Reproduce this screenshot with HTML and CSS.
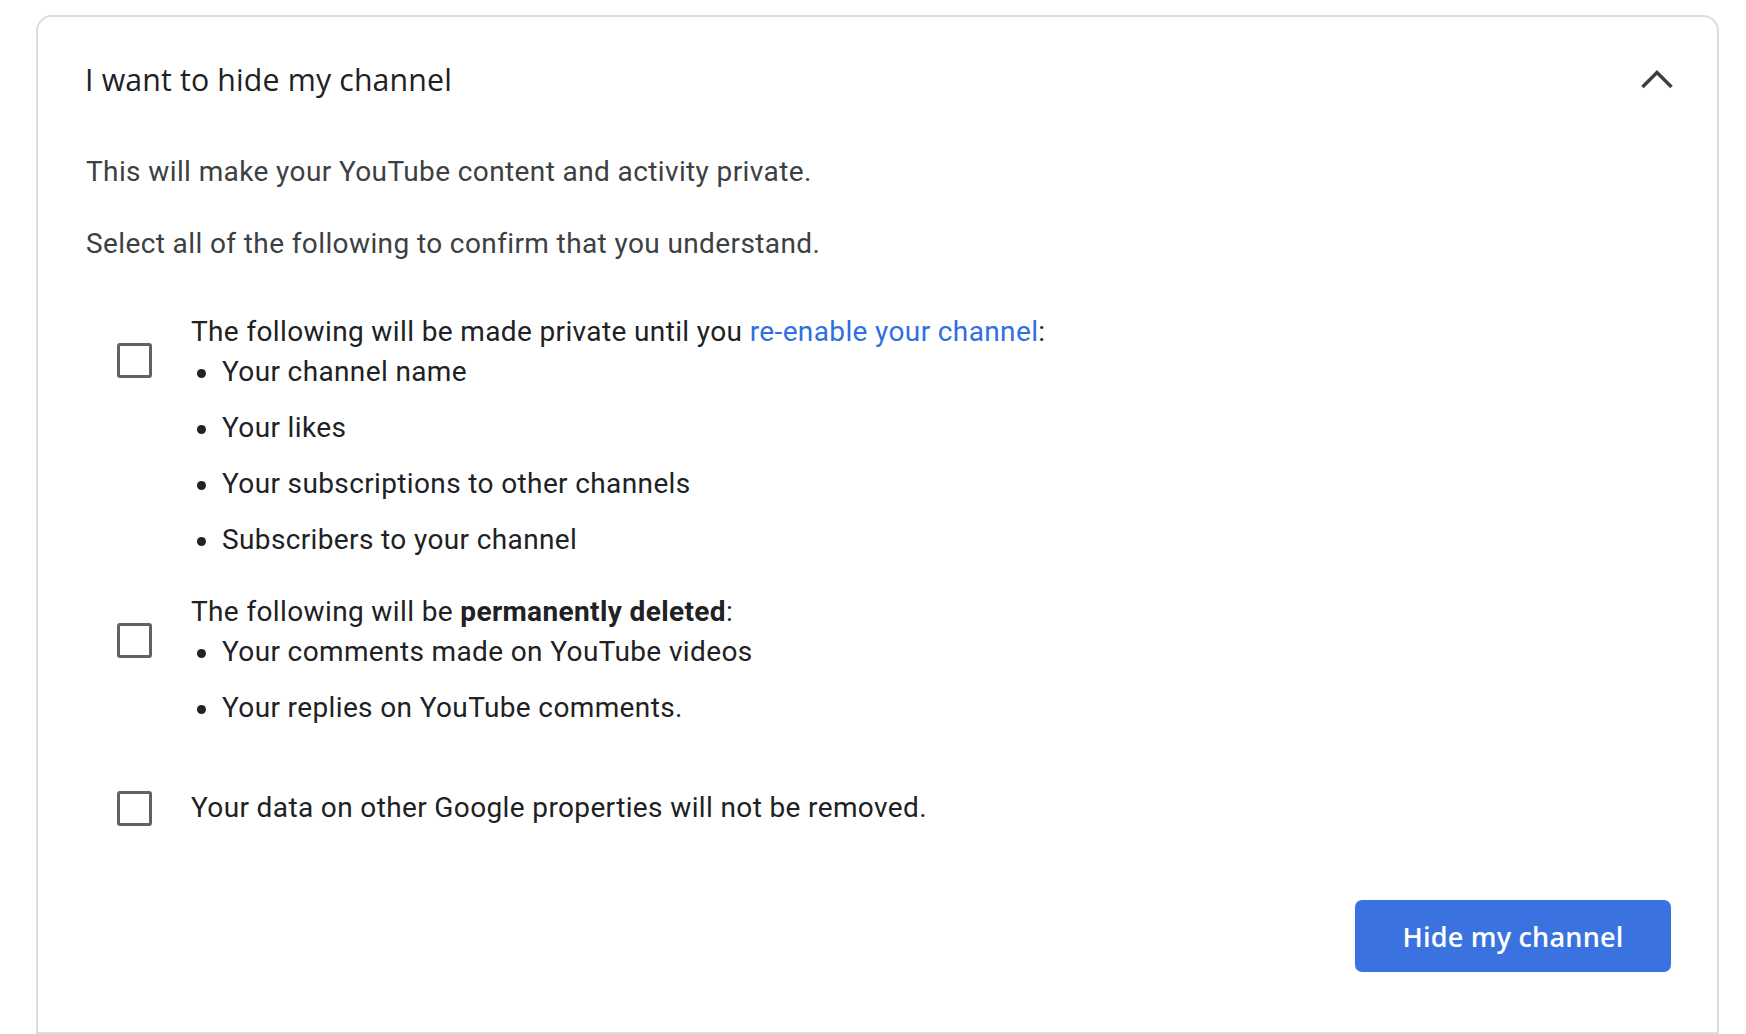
FILE: index.html
```html
<!DOCTYPE html>
<html lang="en">
<head>
<meta charset="utf-8">
<title>Hide my channel</title>
<link rel="stylesheet" href="styles.css">
</head>
<body>
<section class="card">
  <div class="header">
    <h2 class="title">I want to hide my channel</h2>
    <svg class="chevron" width="34" height="21" viewBox="0 0 34 21" aria-hidden="true">
      <polyline points="2.5,18 17,3.5 31.5,18" fill="none" stroke="#3c4043" stroke-width="3.5"/>
    </svg>
  </div>

  <p class="intro first">This will make your YouTube content and activity private.</p>
  <p class="intro second">Select all of the following to confirm that you understand.</p>

  <div class="option multi block-one">
    <span class="checkbox"></span>
    <div class="option-text">
      <div class="line">The following will be made private until you <a class="link" href="#">re-enable your channel</a>:</div>
      <ul class="items">
        <li>Your channel name</li>
        <li>Your likes</li>
        <li>Your subscriptions to other channels</li>
        <li>Subscribers to your channel</li>
      </ul>
    </div>
  </div>

  <div class="option multi block-two">
    <span class="checkbox"></span>
    <div class="option-text">
      <div class="line">The following will be <strong>permanently deleted</strong>:</div>
      <ul class="items">
        <li>Your comments made on YouTube videos</li>
        <li>Your replies on YouTube comments.</li>
      </ul>
    </div>
  </div>

  <div class="option single block-three">
    <span class="checkbox"></span>
    <div class="option-text">
      <div class="line">Your data on other Google properties will not be removed.</div>
    </div>
  </div>

  <div class="actions">
    <button class="primary" type="button">Hide my channel</button>
  </div>
</section>
</body>
</html>
```
FILE: styles.css
```css
html, body {
  margin: 0;
  padding: 0;
  background: #ffffff;
}

body {
  font-family: Roboto, "Liberation Sans", Arial, sans-serif;
  color: #202124;
  overflow: hidden;
}

.card {
  box-sizing: border-box;
  width: 1683px;
  height: 1019px;
  margin: 15px 0 0 36px;
  border: 2px solid #dadce0;
  border-radius: 16px 16px 0 0;
  padding: 43px 43px 0 48px;
}

.header {
  display: flex;
  align-items: center;
  justify-content: space-between;
  height: 40px;
}

.title {
  margin: 0 0 0 -1px;
  font-family: "Open Sans", Roboto, sans-serif;
  font-weight: 400;
  font-size: 30.3px;
  line-height: 40px;
  color: #202124;
  letter-spacing: 0.15px;
}

.chevron {
  display: block;
  margin-top: -2px;
}

.intro {
  margin: 0;
  font-size: 28px;
  line-height: 40px;
  letter-spacing: 0.39px;
  color: #3c4043;
}

.intro.first {
  margin-top: 52px;
}

.intro.second {
  margin-top: 32px;
}

.option {
  display: flex;
  margin-left: 31px;
  font-size: 28px;
  line-height: 40px;
  letter-spacing: 0.37px;
  color: #202124;
}

.option.multi {
  align-items: flex-start;
}

.option.single {
  align-items: center;
}

.block-one {
  margin-top: 48px;
}

.block-two {
  margin-top: 32px;
}

.block-three {
  margin-top: 60px;
}

.checkbox {
  box-sizing: border-box;
  flex: none;
  width: 35px;
  height: 35px;
  border: 3px solid #5f6368;
  border-radius: 3px;
  margin-right: 39px;
}

.option.multi .checkbox {
  margin-top: 31px;
}

.line strong {
  font-weight: 700;
}

.link {
  color: #2f6fe0;
  text-decoration: none;
}

.items {
  list-style: none;
  margin: 0;
  padding: 0;
}

.items li {
  display: flex;
  align-items: center;
  height: 40px;
}

.items li + li {
  margin-top: 16px;
}

.items li::before {
  content: "";
  flex: none;
  width: 9px;
  height: 9px;
  border-radius: 50%;
  background: #202124;
  margin: 2px 16px 0 6px;
}

.actions {
  display: flex;
  justify-content: flex-end;
  margin-top: 72px;
  padding-right: 3px;
}

.primary {
  box-sizing: border-box;
  width: 316px;
  height: 72px;
  border: none;
  border-radius: 7px;
  background: #3a73e0;
  color: #ffffff;
  font-family: "Open Sans", Roboto, sans-serif;
  font-weight: 600;
  font-size: 27px;
  letter-spacing: 0.2px;
  padding: 0;
  cursor: pointer;
}
```
